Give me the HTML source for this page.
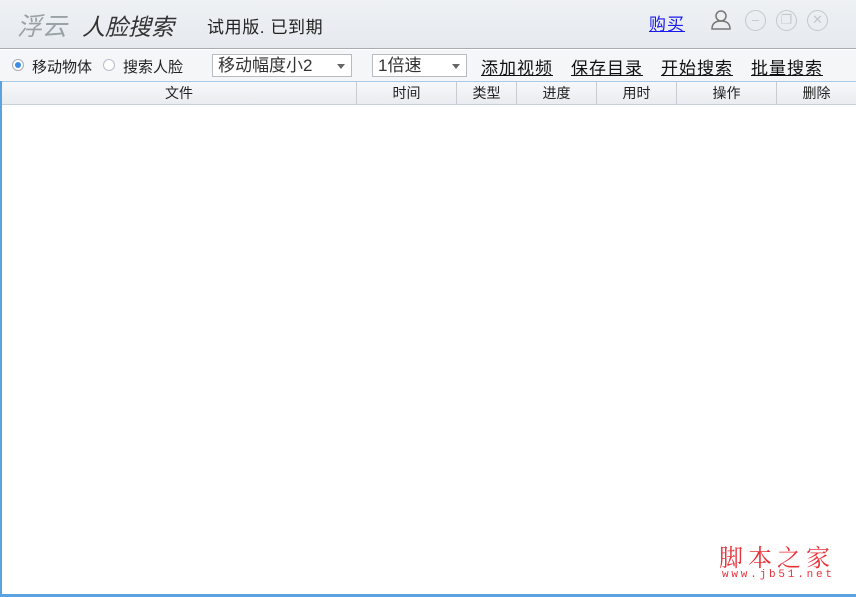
<!DOCTYPE html>
<html><head><meta charset="utf-8"><style>
*{margin:0;padding:0;box-sizing:border-box}
body{width:856px;height:597px;overflow:hidden;background:#fff;font-family:"Liberation Sans","Noto Sans CJK SC",sans-serif;position:relative}
.top{position:absolute;left:0;top:0;width:856px;height:49px;background:linear-gradient(#eef1f4,#e6eaef);border-bottom:1px solid #a9adb2}
.a{position:absolute;white-space:nowrap}
.tb{position:absolute;left:0;top:50px;width:856px;height:31px;background:#f4f6f8}
.sel{position:absolute;height:23px;border:1px solid #b8bcc2;background:#fff;font-size:17px;color:#333;padding-left:5px;line-height:21px}
.sel:after{content:"";position:absolute;right:6px;top:9px;border:4px solid transparent;border-top:5px solid #666}
.lk{font-size:17px;color:#111;text-decoration:underline;top:54px;letter-spacing:1px}
.hd{position:absolute;left:2px;top:81px;width:854px;height:24px;background:linear-gradient(#f7f8fa,#e9ecf0);border-top:1px solid #a8c8e8;border-bottom:1px solid #c8d0da}
.c{position:absolute;top:0;height:22px;line-height:22px;text-align:center;font-size:14px;color:#222;border-right:1px solid #c8ccd2}
.circ{position:absolute;top:10px;width:21px;height:21px;border:1.5px solid #c4c8cc;border-radius:50%;color:#c4c8cc;font-size:13px;text-align:center;line-height:18px}
</style></head><body>
<div class="top"></div>
<div class="a" style="left:17px;top:7px;font-size:25px;font-style:italic;color:#9aa2a8">浮云</div>
<div class="a" style="left:82px;top:8px;font-size:23px;font-style:italic;color:#333">人脸搜索</div>
<div class="a" style="left:207px;top:13px;font-size:17px;color:#222;letter-spacing:0.6px">试用版. 已到期</div>
<div class="a" style="left:649px;top:10px;font-size:17px;color:#1a1aee;text-decoration:underline;letter-spacing:1px">购买</div>
<svg class="a" style="left:710px;top:9px" width="22" height="22" viewBox="0 0 22 22"><circle cx="11" cy="7" r="5" fill="none" stroke="#777" stroke-width="1.5"/><path d="M2 20c0-6 4-8 9-8s9 2 9 8z" fill="none" stroke="#777" stroke-width="1.5"/></svg>
<div class="circ" style="left:745px">–</div>
<div class="circ" style="left:776px">❐</div>
<div class="circ" style="left:807px">✕</div>
<div class="tb"></div>
<div class="a" style="left:12px;top:59px;width:12px;height:12px;border-radius:50%;border:1px solid #aab;background:#fff"><div style="margin:2px;width:6px;height:6px;border-radius:50%;background:#3a8ee6"></div></div>
<div class="a" style="left:32px;top:56px;font-size:15px;color:#222">移动物体</div>
<div class="a" style="left:103px;top:59px;width:12px;height:12px;border-radius:50%;border:1px solid #bbc;background:#fff"></div>
<div class="a" style="left:123px;top:56px;font-size:15px;color:#222">搜索人脸</div>
<div class="sel" style="left:212px;top:54px;width:140px">移动幅度小2</div>
<div class="sel" style="left:372px;top:54px;width:95px">1倍速</div>
<div class="a lk" style="left:481px">添加视频</div>
<div class="a lk" style="left:571px">保存目录</div>
<div class="a lk" style="left:661px">开始搜索</div>
<div class="a lk" style="left:751px">批量搜索</div>
<div class="hd">
<div class="c" style="left:0;width:355px">文件</div>
<div class="c" style="left:355px;width:100px">时间</div>
<div class="c" style="left:455px;width:60px">类型</div>
<div class="c" style="left:515px;width:80px">进度</div>
<div class="c" style="left:595px;width:80px">用时</div>
<div class="c" style="left:675px;width:100px">操作</div>
<div class="c" style="left:775px;width:79px;border-right:0">删除</div>
</div>
<div class="a" style="left:0;top:81px;width:2px;height:516px;background:#5aa2e0"></div>
<div class="a" style="left:0;top:594px;width:856px;height:3px;background:#5aa2e0"></div>
<div class="a" style="left:719px;top:538px;font-size:24px;color:#e8323a;font-family:'Noto Serif CJK SC',serif;letter-spacing:5px">脚本之家</div>
<div class="a" style="left:722px;top:569px;font-size:11px;color:#e8323a;letter-spacing:2.8px;font-family:'Liberation Mono',monospace">www.jb51.net</div>
</body></html>
